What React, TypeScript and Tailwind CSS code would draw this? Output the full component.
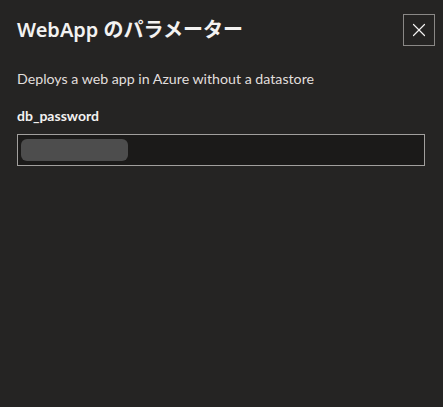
import { X } from "lucide-react";

export default function App() {
	return (
		<div
			className="h-[407px] w-[443px] overflow-hidden bg-[#252423] text-[#f3f2f1]"
			style={{ fontFamily: '"Noto Sans", "Noto Sans CJK JP", sans-serif' }}
		>
			<div className="flex items-start justify-between pl-[17px] pr-[8px] pt-[14px]">
				<h1 className="mt-[1px] text-[20px] font-semibold leading-[30px]">WebApp のパラメーター</h1>
				<button
					type="button"
					className="flex h-[32px] w-[32px] items-center justify-center border border-[#8a8886] text-[#f3f2f1]"
				>
					<X size={22} strokeWidth={1.3} />
				</button>
			</div>

			<div className="px-[17px] pr-[18px] font-['Lato','Noto_Sans',sans-serif]">
				<p className="mt-[23px] text-[14.2px] leading-[20px] text-[#e1dfdd]">Deploys a web app in Azure without a datastore</p>
				<label className="mt-[17px] block text-[14px] font-bold leading-[20px]">db_password</label>
				<div className="mt-[8px] flex h-[32px] items-center border border-[#a19f9d] bg-[#1b1a19] px-[3px]">
					<div className="h-[22px] w-[107px] rounded-[6px] bg-[#4d4d4d]" />
				</div>
			</div>
		</div>
	);
}
